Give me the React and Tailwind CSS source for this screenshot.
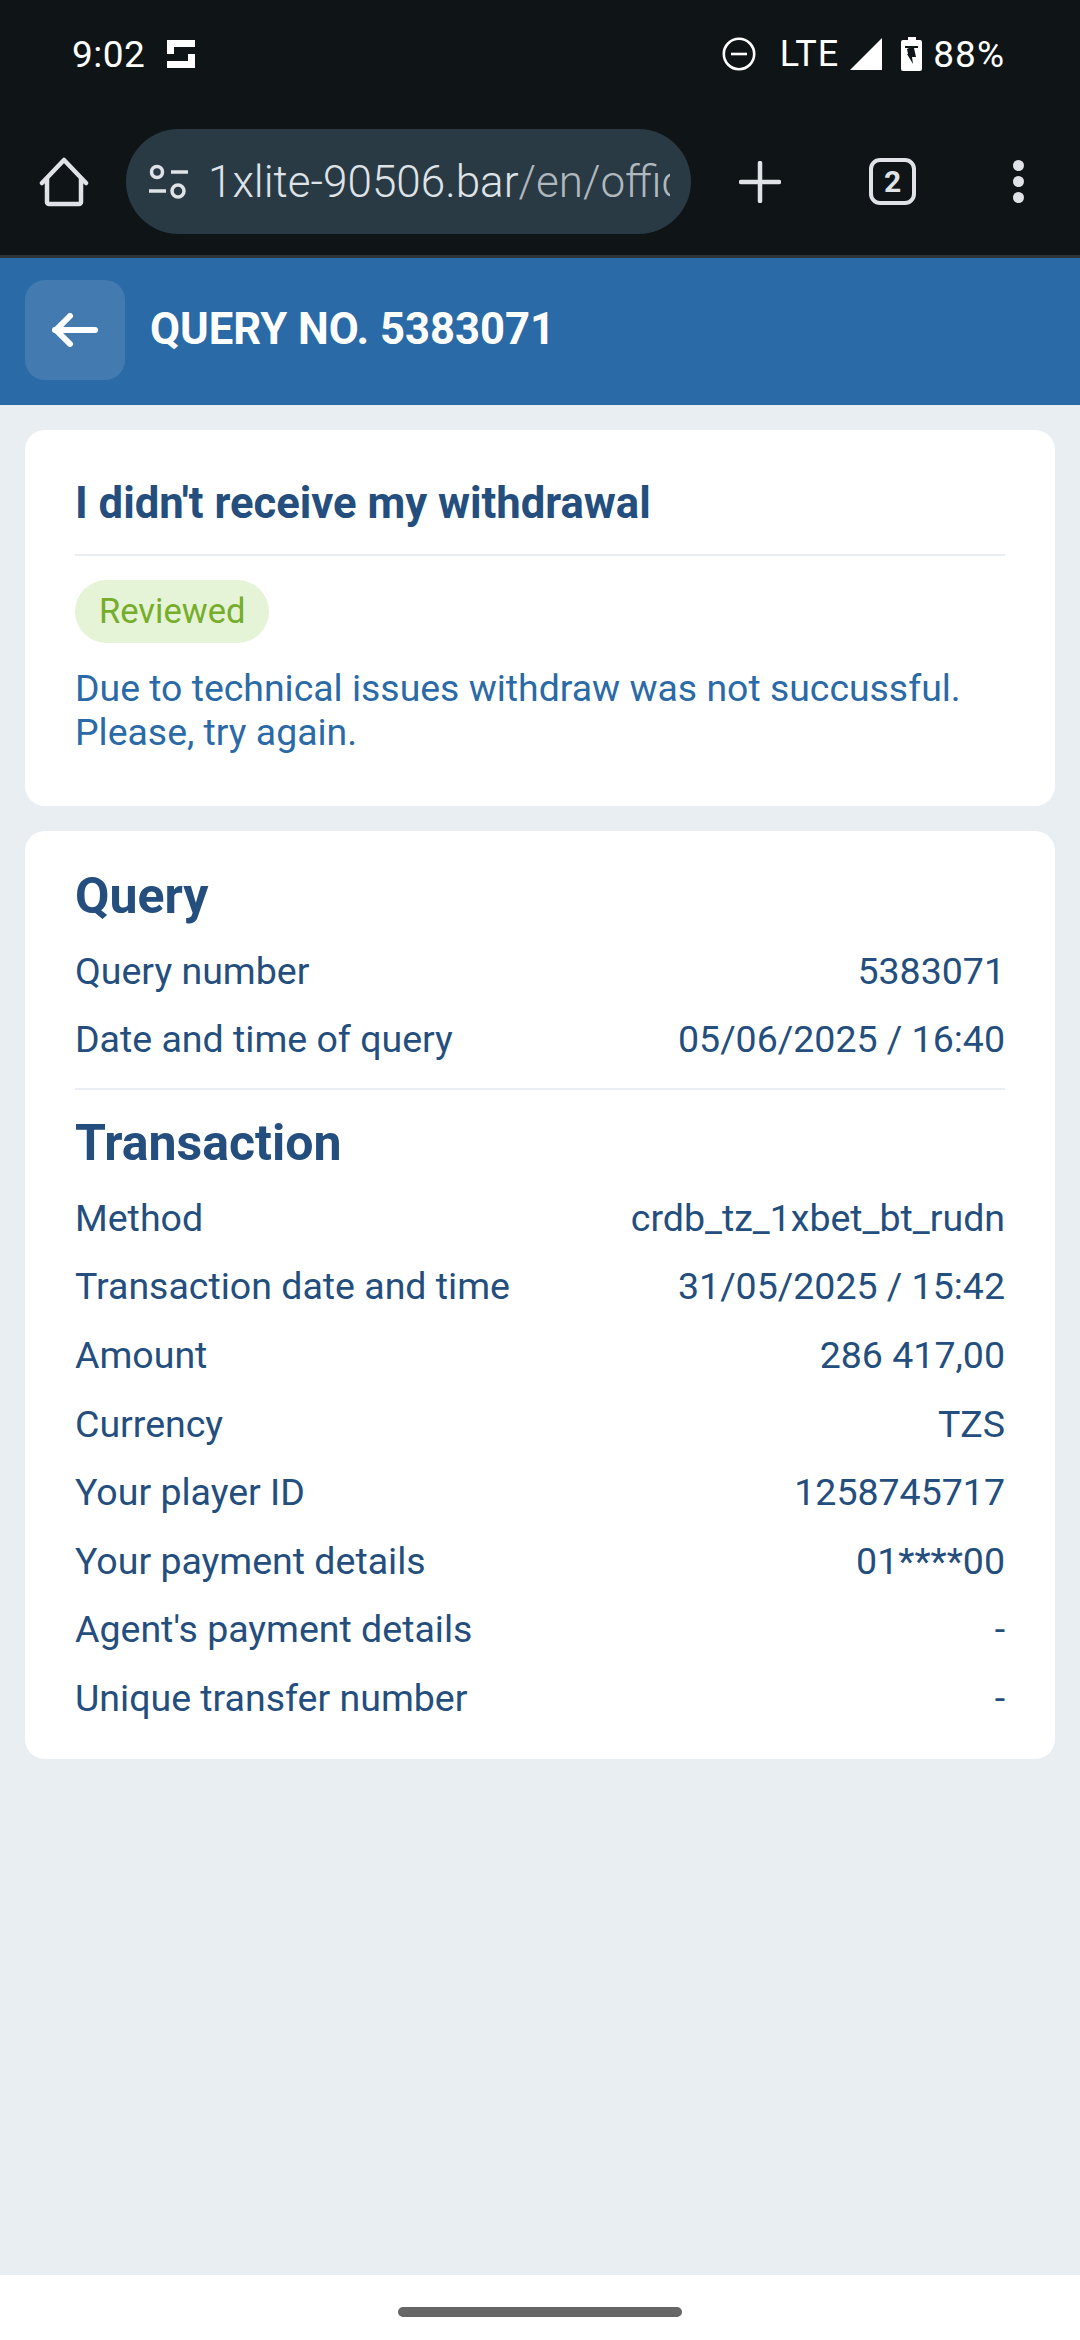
const FONT = "font-['Roboto',sans-serif]";

const queryRows = [
  ["Query number", "5383071"],
  ["Date and time of query", "05/06/2025 / 16:40"],
];

const transactionRows = [
  ["Method", "crdb_tz_1xbet_bt_rudn"],
  ["Transaction date and time", "31/05/2025 / 15:42"],
  ["Amount", "286 417,00"],
  ["Currency", "TZS"],
  ["Your player ID", "1258745717"],
  ["Your payment details", "01****00"],
  ["Agent's payment details", "-"],
  ["Unique transfer number", "-"],
];

function StatusBar() {
  return (
    <div className="flex h-[108px] items-center justify-between pl-[72px] pr-[75px] text-white">
      <div className="flex items-center gap-[22px]">
        <span className="text-[37px] leading-none tracking-[0.5px]">9:02</span>
        <svg width="28" height="28" viewBox="0 0 28 28" fill="#fff">
          <path d="M0 0h28v7H7v7H0zM0 21h21v-7h7v14H0z" />
        </svg>
      </div>
      <div className="flex items-center">
        <svg width="34" height="34" viewBox="0 0 34 34" fill="none" stroke="#fff" strokeWidth="2.600">
          <circle cx="17" cy="17" r="15.200" />
          <path d="M9 17h16" />
        </svg>
        <span className="ml-[24px] text-[36px] leading-none tracking-[1px]">LTE</span>
        <svg className="ml-[11px]" width="33" height="32" viewBox="0 0 33 32" fill="#fff">
          <path d="M32 0v32H0z" />
        </svg>
        <svg className="ml-[18px]" width="21" height="34" viewBox="0 0 21 34" fill="#fff">
          <path
            fillRule="evenodd"
            d="M7 0h8v3h4a2 2 0 0 1 2 2v27a2 2 0 0 1-2 2H2a2 2 0 0 1-2-2V5a2 2 0 0 1 2-2h5zM4 9v2h4l-2 1 1 5H6l6 10-1-7h4l-2-9h4V9z"
          />
        </svg>
        <span className="ml-[11px] text-[37px] leading-none tracking-[1px]">88%</span>
      </div>
    </div>
  );
}

function Toolbar() {
  return (
    <div className="flex h-[150px] items-start border-b-[3px] border-[#2e3438] pt-[21px]">
      <div className="flex h-[105px] w-[126px] items-center justify-center pl-[1px]">
        <svg width="50" height="50" viewBox="0 0 50 50" fill="none" stroke="#dfe3e7" strokeWidth="4.500" strokeLinejoin="round" strokeLinecap="round">
          <path d="M3 26 25 3l22 23" />
          <path d="M8 22v23a2 2 0 0 0 2 2h30a2 2 0 0 0 2-2V22" />
        </svg>
      </div>
      <div className="flex h-[105px] w-[565px] items-center rounded-full bg-[#2a3a45] pl-[22px] pr-[21px]">
        <svg className="shrink-0" width="40" height="36" viewBox="0 0 40 36" fill="none" stroke="#dfe3e7" strokeWidth="3.500">
          <circle cx="9" cy="8" r="5.500" />
          <path d="M23 8h17" />
          <circle cx="30" cy="27" r="6" />
          <path d="M1 27h17" />
        </svg>
        <div className="ml-[20px] overflow-hidden whitespace-nowrap text-[44px] font-light leading-none text-[#dfe3e7]">
          1xlite-90506.bar<span className="text-[#b0b8be]">/en/office</span>
        </div>
      </div>
      <div className="flex h-[105px] flex-1 items-center">
        <svg className="ml-[48px]" width="42" height="42" viewBox="0 0 42 42" stroke="#dfe3e7" strokeWidth="4.500" strokeLinecap="round">
          <path d="M21 2v38M2 21h38" />
        </svg>
        <div className="ml-[88px] flex h-[47px] w-[47px] items-center justify-center rounded-[11px] border-[4px] border-[#dfe3e7] text-[30px] font-bold leading-none text-[#dfe3e7]">
          2
        </div>
        <div className="ml-[97px] flex flex-col gap-[5px]">
          <div className="h-[11px] w-[11px] rounded-full bg-[#dfe3e7]" />
          <div className="h-[11px] w-[11px] rounded-full bg-[#dfe3e7]" />
          <div className="h-[11px] w-[11px] rounded-full bg-[#dfe3e7]" />
        </div>
      </div>
    </div>
  );
}

function Row({ label, value }) {
  return (
    <div className="flex h-[68.6px] items-center justify-between text-[37.500px] leading-none text-[#234e7d]">
      <span>{label}</span>
      <span>{value}</span>
    </div>
  );
}

export default function App() {
  return (
    <div className={`${FONT} flex h-[2340px] w-[1080px] flex-col bg-[#e9eef2]`}>
      <div className="bg-[#0f1417]">
        <StatusBar />
        <Toolbar />
      </div>

      {/* Page header */}
      <div className="flex h-[147px] items-start bg-[#2a6aa6] px-[25px] pt-[22px]">
        <button className="flex h-[100px] w-[100px] items-center justify-center rounded-[20px] bg-[#437bb0]">
          <svg width="46" height="34" viewBox="0 0 46 34" fill="none" stroke="#fff" strokeWidth="6" strokeLinecap="round" strokeLinejoin="miter">
            <path d="M3 17h40" />
            <path d="M18 3 4 17l14 14" />
          </svg>
        </button>
        <h1 className="ml-[25px] flex h-[100px] items-center text-[43.600px] font-bold leading-none text-white">
          QUERY NO. 5383071
        </h1>
      </div>

      {/* Status card */}
      <div className="mx-[25px] mt-[25px] h-[376px] rounded-[20px] bg-white px-[50px] pt-[49px]">
        <h2 className="text-[43.600px] font-bold leading-[50px] text-[#234e7d]">I didn't receive my withdrawal</h2>
        <div className="mt-[25px] h-[2px] bg-[#e9eef2]" />
        <div className="mt-[24px] inline-flex h-[63px] items-center rounded-full bg-[#e5f3d6] px-[24px] text-[34.500px] leading-none text-[#76ad2b]">
          Reviewed
        </div>
        <p className="mt-[23px] text-[37.400px] leading-[44px] text-[#2a6aa6]">
          Due to technical issues withdraw was not succussful.
          <br />
          Please, try again.
        </p>
      </div>

      {/* Details card */}
      <div className="mx-[25px] mt-[25px] h-[928px] rounded-[20px] bg-white px-[50px] pt-[37px]">
        <h2 className="text-[50px] font-bold leading-[56px] text-[#234e7d]">Query</h2>
        <div className="mt-[13px]">
          {queryRows.map(([label, value]) => (
            <Row key={label} label={label} value={value} />
          ))}
        </div>
        <div className="mt-[14px] h-[2px] bg-[#e9eef2]" />
        <h2 className="mt-[25px] text-[50px] font-bold leading-[56px] text-[#234e7d]">Transaction</h2>
        <div className="mt-[13px]">
          {transactionRows.map(([label, value]) => (
            <Row key={label} label={label} value={value} />
          ))}
        </div>
      </div>

      <div className="flex-1" />

      {/* Gesture bar */}
      <div className="flex h-[65px] items-start justify-center bg-white pt-[32px]">
        <div className="h-[10px] w-[284px] rounded-full bg-[#666666]" />
      </div>
    </div>
  );
}
